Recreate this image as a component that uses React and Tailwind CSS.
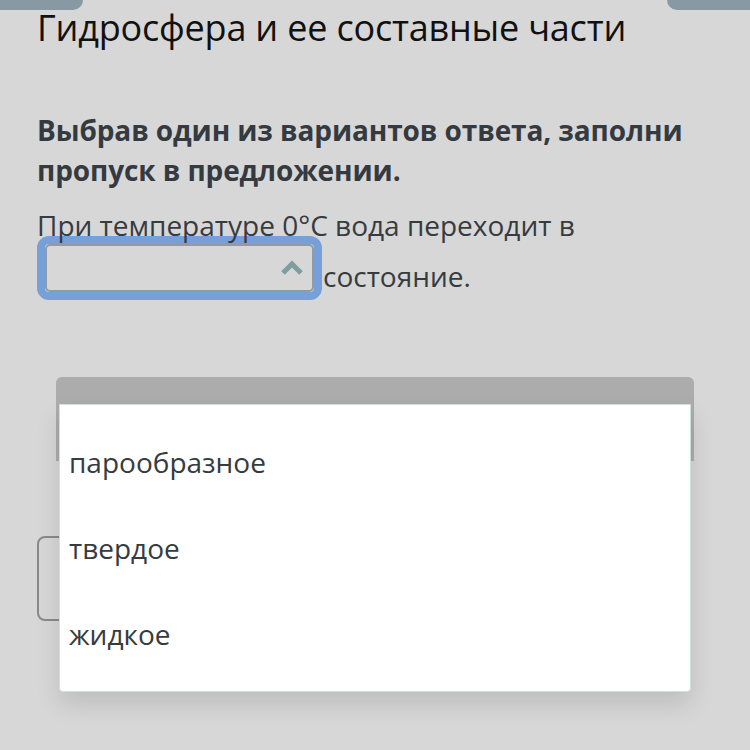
import { useState } from "react";

const options = ["парообразное", "твердое", "жидкое"];

export default function App() {
    const [open] = useState(true);

    return (
        <div
            className="relative w-[750px] h-[750px] overflow-hidden bg-[#d7d7d7] text-[#363b40]"
            style={{ fontFamily: '"Open Sans", "Noto Sans", sans-serif' }}
        >
            {/* top tabs */}
            <div className="flex justify-between">
                <div className="w-[83px] h-[10px] bg-[#8899a3] rounded-br-[10px]" />
                <div className="w-[83px] h-[10px] bg-[#8899a3] rounded-bl-[10px]" />
            </div>

            <div className="px-[37px]">
                <h1 className="text-[36px] leading-[42px] text-[#111] tracking-[-0.2px] mt-[-3px]">
                    Гидросфера и ее составные части
                </h1>

                <p className="mt-[61px] text-[28px] leading-[40px] font-bold text-[#343a40] tracking-[-0.1px]">
                    Выбрав один из вариантов ответа, заполни пропуск в предложении.
                </p>

                {/* descenders sit over the select's ring */}
                <p className="relative z-10 mt-[18px] text-[28px] leading-[34px]">
                    При температуре 0°С вода переходит в
                </p>
                <div className="flex items-end gap-[1px] mt-[-6px]">
                    <div className="w-[285px] h-[64px] border-[8px] border-[#77a0d8] rounded-[12px]">
                        <div className="h-full border-2 border-[#8f9ca3] rounded-[5px] flex items-center justify-end pr-[8px]">
                            <svg width="24" height="16" viewBox="0 0 24 16">
                                <path
                                    d="M3 13 L12 4 L21 13"
                                    fill="none"
                                    stroke="#7f9c9f"
                                    strokeWidth="5"
                                />
                            </svg>
                        </div>
                    </div>
                    <span className="text-[28px] leading-[34px] mb-[7px]">состояние.</span>
                </div>

                {/* element behind the menu */}
                <div className="mt-[236px] w-[120px] h-[85px] border-2 border-[#8a8a8a] rounded-[8px]" />
            </div>

            {/* open dropdown menu */}
            {open && (
                <div className="absolute z-20 left-[56px] top-[377px] w-[638px]">
                    <div className="h-[84px] bg-[#acacac] rounded-t-[6px]" />
                    <div className="absolute left-[3px] right-[3px] top-[27px] h-[288px] bg-white border border-[#cfe1dd] rounded-b-[4px] shadow-[0_12px_24px_rgba(0,0,0,0.12)] pl-[9px] pt-[14px]">
                        {options.map((o) => (
                            <div key={o} className="h-[86px] flex items-center text-[28px]">
                                {o}
                            </div>
                        ))}
                    </div>
                </div>
            )}
        </div>
    );
}
